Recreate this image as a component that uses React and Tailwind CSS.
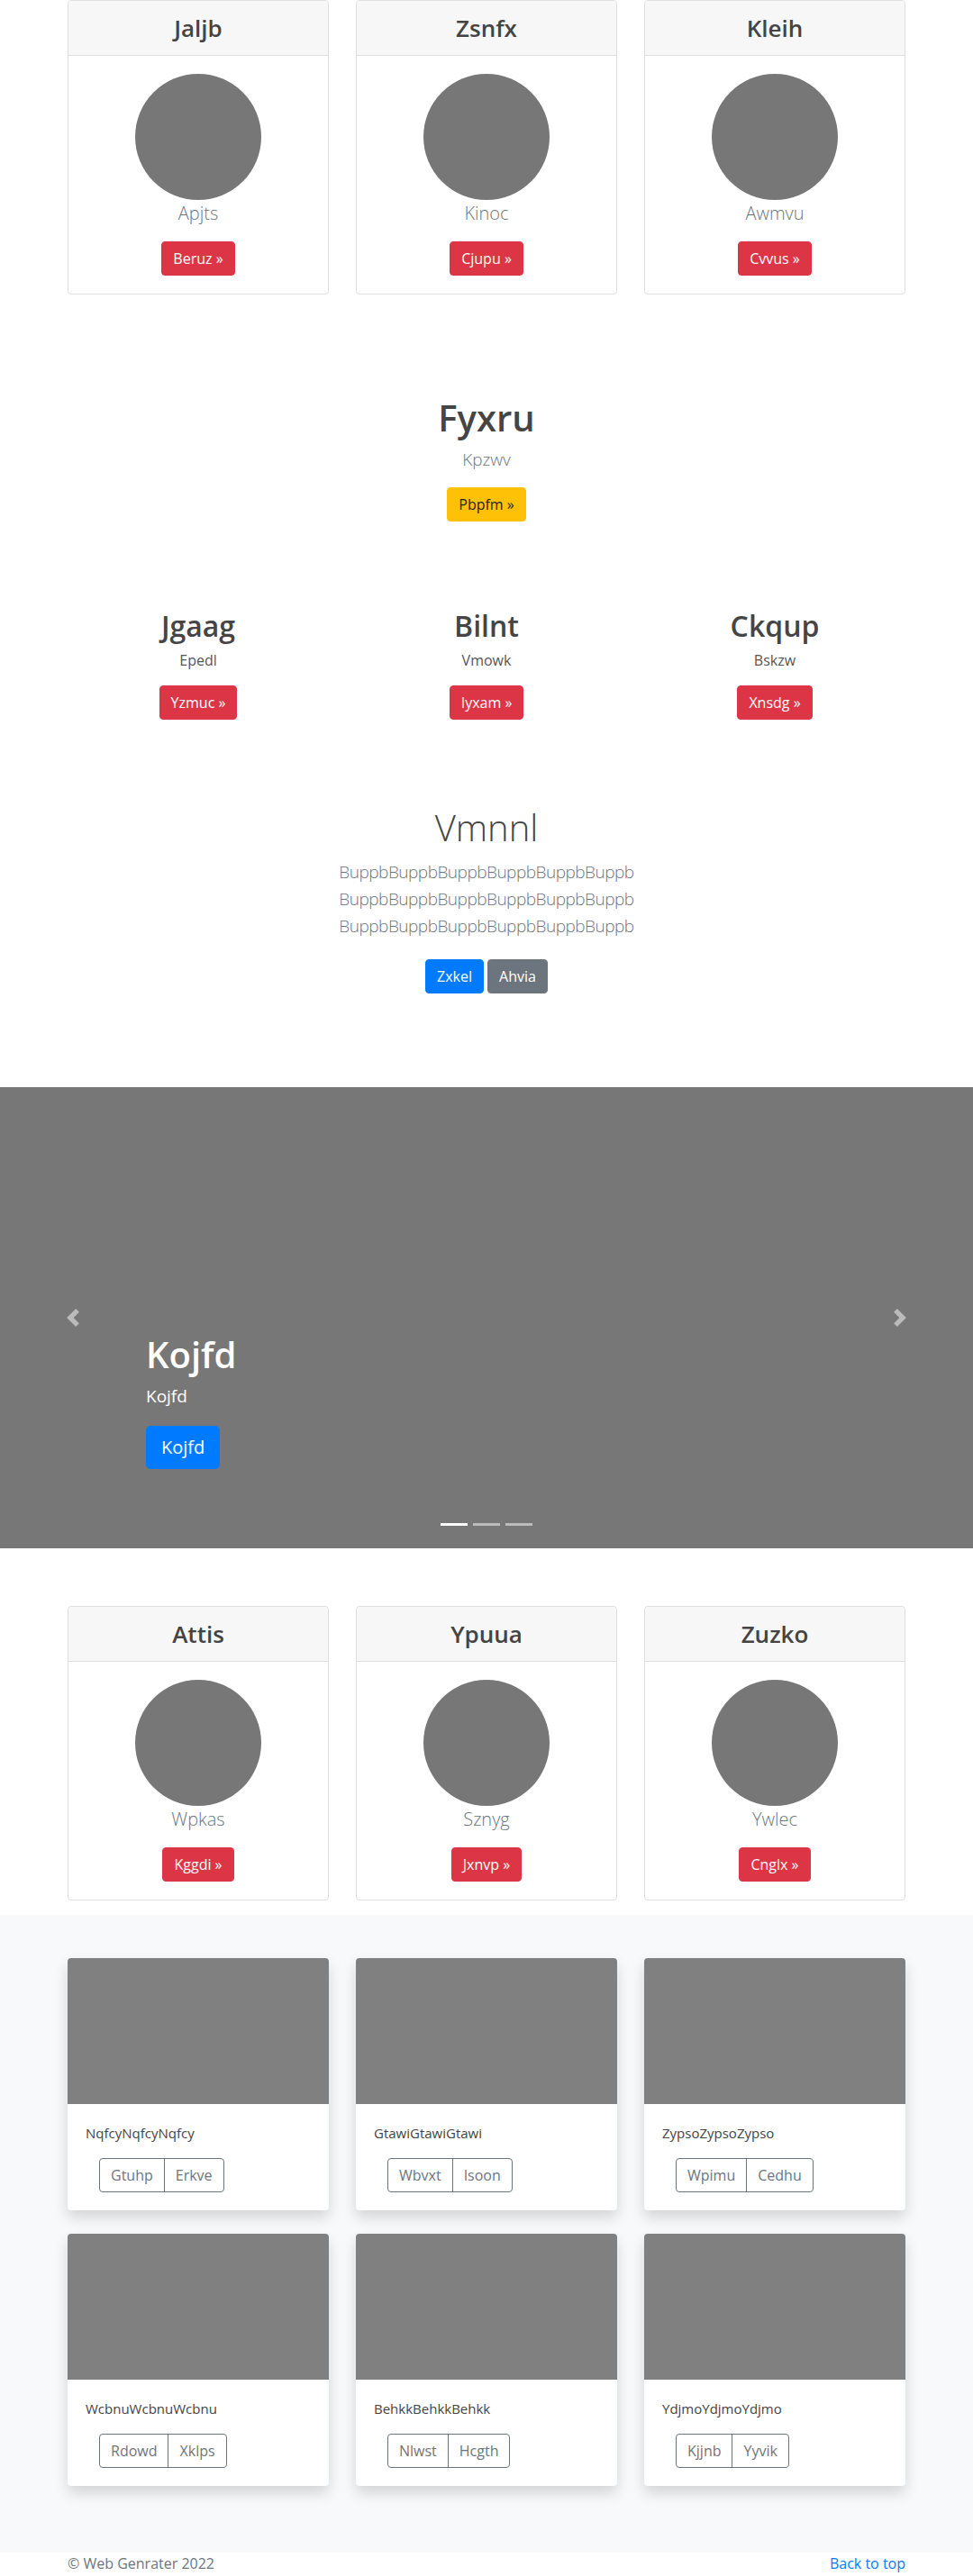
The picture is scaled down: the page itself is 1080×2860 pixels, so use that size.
import React from "react";

const topCards = [
  { title: "Jaljb", text: "Apjts", btn: "Beruz" },
  { title: "Zsnfx", text: "Kinoc", btn: "Cjupu" },
  { title: "Kleih", text: "Awmvu", btn: "Cvvus" },
];

const lowerCards = [
  { title: "Attis", text: "Wpkas", btn: "Kggdi" },
  { title: "Ypuua", text: "Sznyg", btn: "Jxnvp" },
  { title: "Zuzko", text: "Ywlec", btn: "Cnglx" },
];

const features = [
  { title: "Jgaag", text: "Epedl", btn: "Yzmuc" },
  { title: "Bilnt", text: "Vmowk", btn: "Iyxam" },
  { title: "Ckqup", text: "Bskzw", btn: "Xnsdg" },
];

const album = [
  { text: "NqfcyNqfcyNqfcy", a: "Gtuhp", b: "Erkve" },
  { text: "GtawiGtawiGtawi", a: "Wbvxt", b: "Isoon" },
  { text: "ZypsoZypsoZypso", a: "Wpimu", b: "Cedhu" },
  { text: "WcbnuWcbnuWcbnu", a: "Rdowd", b: "Xklps" },
  { text: "BehkkBehkkBehkk", a: "Nlwst", b: "Hcgth" },
  { text: "YdjmoYdjmoYdjmo", a: "Kjjnb", b: "Yyvik" },
];

const ProfileCard = ({ title, text, btn }) => (
  <div className="border border-[#dfdfdf] rounded-[4px] text-center bg-white">
    <div className="h-[61px] flex items-center justify-center bg-[#f7f7f7] border-b border-[#dfdfdf] rounded-t-[4px]">
      <h4 className="text-[26px] font-semibold text-[#444]">{title}</h4>
    </div>
    <div className="p-5">
      <div className="w-[140px] h-[140px] rounded-full bg-[#777] mx-auto" />
      <p className="text-[20px] leading-[30px] font-light text-[#6c757d]">{text}</p>
      <a className="inline-block mt-4 px-3 py-[6px] text-base leading-6 border border-[#dc3545] bg-[#dc3545] text-white rounded-[4px]">
        {btn} »
      </a>
    </div>
  </div>
);

const CardRow = ({ cards }) => (
  <div className="mx-auto w-[930px] grid grid-cols-3 gap-[30px]">
    {cards.map((c) => (
      <ProfileCard key={c.title} {...c} />
    ))}
  </div>
);

const AlbumCard = ({ text, a, b }) => (
  <div className="bg-white rounded-[4px] overflow-hidden shadow-[0_8px_16px_rgba(0,0,0,0.15)]">
    <div className="h-[162px] bg-[#808080]" />
    <div className="p-5">
      <p className="text-[15px] leading-6 text-[#444]">{text}</p>
      <div className="mt-4 ml-[15px] inline-flex border border-[#6c757d] rounded-[4px] text-[#6c757d] text-base leading-6">
        <span className="px-3 py-[6px]">{a}</span>
        <span className="px-3 py-[6px] border-l border-[#6c757d]">{b}</span>
      </div>
    </div>
  </div>
);

export default function App() {
  return (
    <div className="font-['Open_Sans',sans-serif] text-[#444] bg-white">
      <CardRow cards={topCards} />

      {/* hero */}
      <div className="mt-[113px] text-center">
        <h1 className="text-[40px] leading-[48px] font-semibold text-[#454545]">Fyxru</h1>
        <p className="mt-2 text-[19px] leading-[28px] font-light text-[#6c757d]">Kpzwv</p>
        <a className="inline-block mt-[17px] px-3 py-[6px] text-base leading-6 border border-[#ffc107] bg-[#ffc107] text-[#212529] rounded-[4px]">
          Pbpfm »
        </a>
      </div>

      {/* three features */}
      <div className="mt-[97px] mx-auto w-[960px] grid grid-cols-3 text-center">
        {features.map((f) => (
          <div key={f.title} className="px-[15px]">
            <h2 className="text-[32px] leading-[38px] font-semibold text-[#454545]">{f.title}</h2>
            <p className="mt-[7px] text-base leading-6 text-[#555]">{f.text}</p>
            <a className="inline-block mt-4 px-3 py-[6px] text-base leading-6 border border-[#dc3545] bg-[#dc3545] text-white rounded-[4px]">
              {f.btn} »
            </a>
          </div>
        ))}
      </div>

      {/* jumbotron */}
      <div className="mt-[96px] text-center">
        <h1 className="text-[40px] leading-[48px] font-light text-[#454545]">Vmnnl</h1>
        <p className="mt-[10px] text-[19px] leading-[30px] tracking-[-0.5px] font-light text-[#6c757d]">
          BuppbBuppbBuppbBuppbBuppbBuppb
          <br />
          BuppbBuppbBuppbBuppbBuppbBuppb
          <br />
          BuppbBuppbBuppbBuppbBuppbBuppb
        </p>
        <div className="mt-[22px] flex justify-center gap-1">
          <a className="px-3 py-[6px] text-base leading-6 border border-[#007bff] bg-[#007bff] text-white rounded-[4px]">Zxkel</a>
          <a className="px-3 py-[6px] text-base leading-6 border border-[#6c757d] bg-[#6c757d] text-white rounded-[4px]">Ahvia</a>
        </div>
      </div>

      {/* carousel */}
      <div className="relative mt-[104px] h-[512px] bg-[#777]">
        <div className="absolute left-0 top-0 bottom-0 w-[15%] flex items-center justify-center opacity-50">
          <svg width="20" height="20" viewBox="0 0 8 8" fill="#fff">
            <path d="M5.25 0l-4 4 4 4 1.5-1.5L4.25 4l2.5-2.5L5.25 0z" />
          </svg>
        </div>
        <div className="absolute right-0 top-0 bottom-0 w-[15%] flex items-center justify-center opacity-50">
          <svg width="20" height="20" viewBox="0 0 8 8" fill="#fff">
            <path d="M2.75 0l-1.5 1.5L3.75 4l-2.5 2.5L2.75 8l4-4-4-4z" />
          </svg>
        </div>
        <div className="absolute left-[15%] bottom-[88px] text-white">
          <h1 className="text-[40px] leading-[48px] font-semibold">Kojfd</h1>
          <p className="mt-2 text-[19px] leading-[28px]">Kojfd</p>
          <a className="inline-block mt-[19px] px-4 py-2 text-[20px] leading-[30px] border border-[#007bff] bg-[#007bff] text-white rounded-[5px]">
            Kojfd
          </a>
        </div>
        <div className="absolute bottom-[25px] left-0 right-0 flex justify-center gap-[6px]">
          <span className="w-[30px] h-[3px] bg-white" />
          <span className="w-[30px] h-[3px] bg-white/50" />
          <span className="w-[30px] h-[3px] bg-white/50" />
        </div>
      </div>

      <div className="mt-[64px]">
        <CardRow cards={lowerCards} />
      </div>

      {/* album */}
      <div className="mt-4 bg-[#f8f9fa] pt-[48px] pb-[50px]">
        <div className="mx-auto w-[930px] grid grid-cols-3 gap-x-[30px] gap-y-[26px]">
          {album.map((c) => (
            <AlbumCard key={c.text} {...c} />
          ))}
        </div>
        <div className="h-6" />
      </div>

      <footer className="pb-12 text-[#6c757d]">
        <div className="mx-auto w-[930px] flex justify-between text-base leading-6">
          <p>© Web Genrater 2022</p>
          <a className="text-[#007bff]">Back to top</a>
        </div>
      </footer>
    </div>
  );
}
